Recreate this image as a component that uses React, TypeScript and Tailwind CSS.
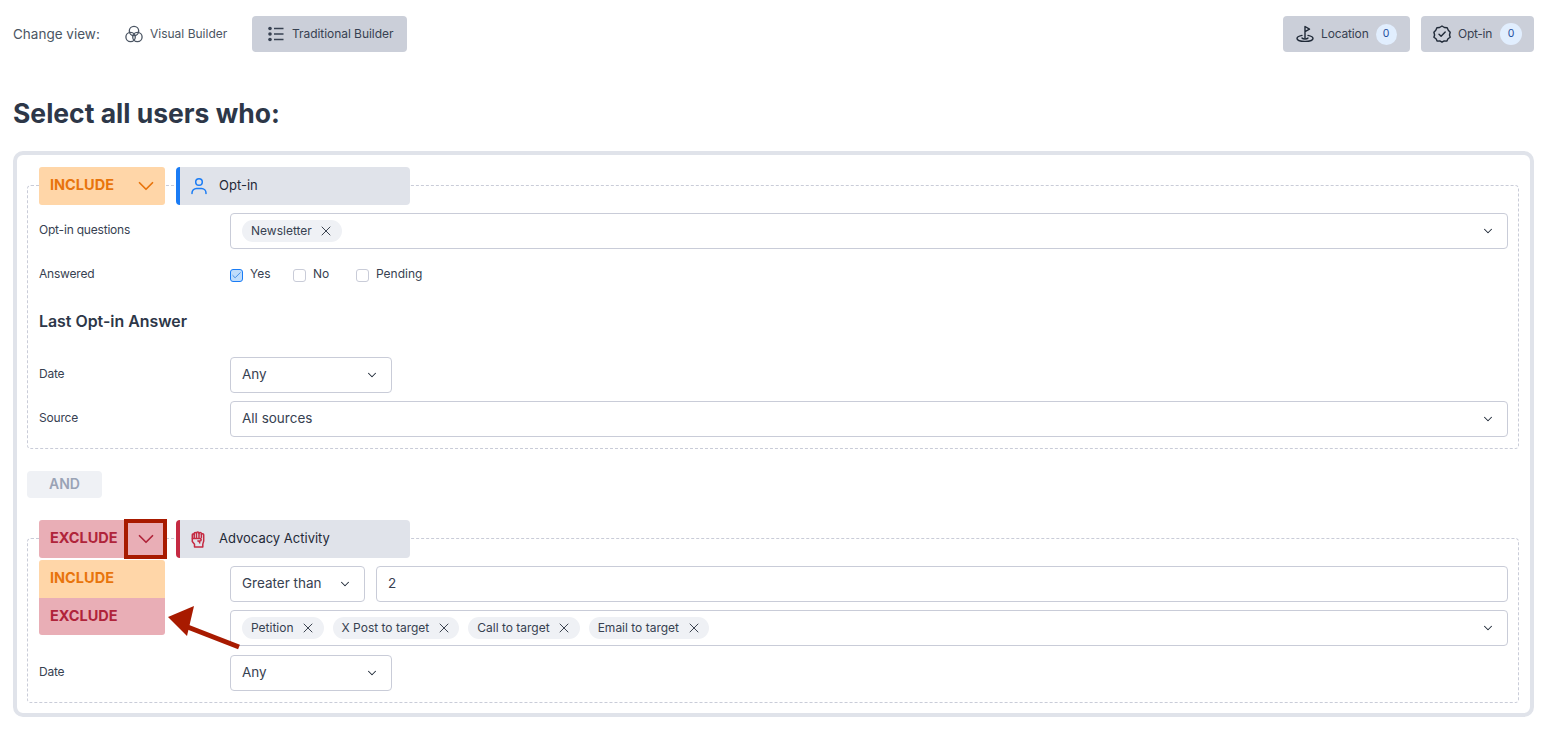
import { ChevronDown, X, Check } from 'lucide-react';

function ThreeCircles() {
  return (
    <svg width="18" height="18" viewBox="0 0 18 18" fill="none" stroke="currentColor" strokeWidth="1.3">
      <circle cx="9" cy="6" r="4.7" />
      <circle cx="5.6" cy="12" r="4.7" />
      <circle cx="12.4" cy="12" r="4.7" />
    </svg>
  );
}

function ListIcon() {
  return (
    <svg width="16" height="16" viewBox="0 0 16 16" fill="none" stroke="currentColor" strokeWidth="1.3">
      <circle cx="2" cy="2.5" r="1.8" fill="currentColor" stroke="none" />
      <circle cx="2" cy="8" r="1.8" fill="currentColor" stroke="none" />
      <circle cx="2" cy="13.5" r="1.8" fill="currentColor" stroke="none" />
      <path d="M6 2.5h9.5M6 8h9.5M6 13.5h9.5" />
    </svg>
  );
}

function FlagIcon() {
  return (
    <svg width="18" height="18" viewBox="0 0 18 18" fill="none" stroke="#1f2937" strokeWidth="1.4" strokeLinejoin="round" strokeLinecap="round">
      <path d="M9 13V1.5l4.5 2.6L9 6.7" />
      <path d="M6 10.4C3 11 1 12 1 13.4c0 1.7 3.6 3 8 3s8-1.3 8-3c0-1.4-2-2.4-5-3" />
      <path d="M6 13c.6.7 1.7 1 3 1s2.4-.3 3-1" />
    </svg>
  );
}

function BadgeCheck() {
  return (
    <svg width="18" height="18" viewBox="0 0 18 18" fill="none" stroke="#1f2937" strokeWidth="1.4" strokeLinejoin="round" strokeLinecap="round">
      <path d="M9 1l2.4 1.5 2.8.2 1.1 2.6 1.9 2-.7 2.7.7 2.2-2.2 1.6-1.2 2.3-2.6-.2L9 17.2l-2.2-1.3-2.6.2L3 13.8.9 12.2l.7-2.2-.7-2.7 1.9-2 1.1-2.6 2.7-.2z" />
      <path d="M6 9.2l2.1 2.1L12.2 7" />
    </svg>
  );
}

function UserIcon() {
  return (
    <svg width="16" height="18" viewBox="0 0 16 18" fill="none" stroke="#1a7cf5" strokeWidth="1.5" strokeLinecap="round">
      <circle cx="8" cy="5" r="3.3" />
      <path d="M1 16.5v-.5a4.5 4.5 0 0 1 4.5-4.5h5a4.5 4.5 0 0 1 4.5 4.5v.5" />
    </svg>
  );
}

function FistIcon() {
  return (
    <svg width="16" height="19" viewBox="0 0 16 18" fill="none" stroke="#c52a42" strokeWidth="1.5" strokeLinejoin="round" strokeLinecap="round">
      <path d="M3.5 16.5v-2.7L1.3 11V4.2c0-.9 1.7-.9 1.9 0V3c0-1.2 2.2-1.2 2.3 0v-.6c0-1.2 2.4-1.2 2.5 0V3c.1-1.2 2.3-1.2 2.4 0v1c.2-1 2.3-1 2.3.2v6.3L11.8 13.6v2.9z" />
      <path d="M3.2 4.2V7.5M5.5 3v4M8 3v4M10.4 4v3" />
      <path d="M1.5 8h7.700c1.300 0 1.300 2.400 0 2.400H6.800c1 .3 1.800 1 2 2" />
    </svg>
  );
}

function Chip({ label }: { label: string }) {
  return (
    <span className="flex h-[22px] items-center gap-[6.5px] rounded-full bg-[#eff1f5] pl-[9px] pr-[7.5px] text-[12px] text-[#374151]">
      <span className="pb-[1px]">{label}</span>
      <X size={16} strokeWidth={1.3} className="text-[#1f2937]" />
    </span>
  );
}

function FieldRow({
  label,
  children,
  className = '',
  labelClass = 'pb-[2px]',
}: {
  label: string;
  children: React.ReactNode;
  className?: string;
  labelClass?: string;
}) {
  return (
    <div className={`flex items-center ${className}`}>
      <span className={`w-[202px] shrink-0 pl-[11px] text-[12px] tracking-[-0.2px] text-[#374151] ${labelClass}`}>{label}</span>
      <div className="min-w-0 flex-1">{children}</div>
    </div>
  );
}

function SelectBox({ children, width }: { children: React.ReactNode; width?: string }) {
  return (
    <div className={`flex h-[36px] items-center justify-between rounded border border-[#c9ccd8] bg-white pl-[11px] pr-[12px] text-[#374151] ${width ?? 'w-full'}`}>
      <div className="flex items-center gap-[9px]">{children}</div>
      <ChevronDown size={14} strokeWidth={1.8} className="text-[#1f2937]" />
    </div>
  );
}

function SelectText({ children }: { children: React.ReactNode }) {
  return <span className="pb-[1px] text-[13.5px]">{children}</span>;
}

function Option({ label, checked }: { label: string; checked?: boolean }) {
  return (
    <span className="flex w-[63px] items-center gap-[7px] text-[12px] text-[#374151]">
      <span
        className={`mt-[3px] flex h-[13px] w-[13px] shrink-0 items-center justify-center rounded-[3px] border ${
          checked ? 'border-[#1a7cf5] bg-[#bfdcfb]' : 'border-[#c9ccd8] bg-white'
        }`}
      >
        {checked && <Check size={11} strokeWidth={1.8} className="text-[#2f7fe0]" />}
      </span>
      {label}
    </span>
  );
}

function RuleHead({
  mode,
  title,
  accent,
  icon,
}: {
  mode: 'include' | 'exclude';
  title: string;
  accent: string;
  icon: React.ReactNode;
}) {
  const isInclude = mode === 'include';
  return (
    <div className="relative z-10 ml-[12px] flex h-[38px] gap-[11px]">
      <div
        className={`flex w-[126px] items-center justify-between rounded-[3px] pl-[11px] pr-[6px] text-[14.5px] font-bold ${
          isInclude ? 'bg-[#ffd6a8] text-[#e8740c]' : 'bg-[#e9aeb6] text-[#b0243a]'
        }`}
      >
        <span className="pb-[3px]">{isInclude ? 'INCLUDE' : 'EXCLUDE'}</span>
        <ChevronDown size={26} strokeWidth={1.6} />
      </div>
      <div className={`flex w-[234px] items-center gap-[12px] rounded-[4px] border-l-[4px] bg-[#e0e3ea] pl-[11px] text-[13px] text-[#1f2937] ${accent}`}>
        {icon}
        <span className="pb-[1px]">{title}</span>
      </div>
    </div>
  );
}

export default function App() {
  return (
    <div className="relative h-[754px] overflow-hidden bg-white font-['Inter',sans-serif]">
      <div className="flex items-start justify-between pl-[13px] pr-[16px] pt-[16px]">
        <div className="flex h-[36px] items-center">
          <span className="w-[112px] text-[13.5px] text-[#4b5563]">Change view:</span>
          <span className="flex w-[127px] items-center gap-[7px] text-[12px] text-[#4b5563]">
            <ThreeCircles />
            Visual Builder
          </span>
          <span className="flex h-[36px] w-[155px] items-center gap-[8px] rounded bg-[#cbcfd9] pl-[16px] text-[12px] tracking-[-0.05px] text-[#374151]">
            <ListIcon />
            Traditional Builder
          </span>
        </div>
        <div className="flex gap-[11px]">
          <span className="flex h-[36px] w-[127px] items-center gap-[7px] rounded bg-[#cbcfd9] pl-[13px] text-[12px] tracking-[-0.15px] text-[#374151]">
            <FlagIcon />
            Location
            <span className="flex h-[21px] w-[21px] items-center justify-center rounded-full bg-[#e1eefe] text-[10.5px] text-[#1d4e9e]">0</span>
          </span>
          <span className="flex h-[36px] w-[113px] items-center gap-[7px] rounded bg-[#cbcfd9] pl-[12px] text-[12px] tracking-[-0.3px] text-[#374151]">
            <BadgeCheck />
            Opt-in
            <span className="ml-[1px] flex h-[22px] w-[22px] items-center justify-center rounded-full bg-[#e1eefe] text-[10.5px] text-[#1d4e9e]">0</span>
          </span>
        </div>
      </div>

      <h1 className="ml-[13px] mt-[45px] text-[26.5px] font-bold leading-[32px] text-[#2d3748]">Select all users who:</h1>

      <div className="mx-[13px] mt-[22px] h-[566px] w-[1521px] rounded-[10px] border-[4px] border-[#e0e3ea] px-[10px] pt-[12px]">
        <RuleHead mode="include" title="Opt-in" accent="border-[#1a7cf5]" icon={<UserIcon />} />
        <div className="-mt-[20px] flex h-[264px] w-[1492px] flex-col rounded border border-dashed border-[#c9ccd8] pr-[10px] pt-[27px]">
          <FieldRow label="Opt-in questions">
            <SelectBox><Chip label="Newsletter" /></SelectBox>
          </FieldRow>
          <FieldRow label="Answered" labelClass="pb-0" className="mt-[14px] h-[22px]">
            <div className="flex items-center">
              <Option label="Yes" checked />
              <Option label="No" />
              <Option label="Pending" />
            </div>
          </FieldRow>
          <h2 className="ml-[11px] mt-[26px] text-[15.9px] font-semibold leading-[21px] text-[#2d3748]">Last Opt-in Answer</h2>
          <FieldRow label="Date" className="mt-[25px]">
            <SelectBox width="w-[162px]"><SelectText>Any</SelectText></SelectBox>
          </FieldRow>
          <FieldRow label="Source" className="mt-[8px]">
            <SelectBox><SelectText>All sources</SelectText></SelectBox>
          </FieldRow>
        </div>

        <div className="mt-[22px] flex h-[27px] w-[75px] items-center justify-center rounded bg-[#eff1f5] pb-[2px] text-[14px] font-semibold text-[#9aa3b5]">AND</div>

        <div className="mt-[22px]">
          <RuleHead mode="exclude" title="Advocacy Activity" accent="border-[#c52a42]" icon={<FistIcon />} />
          <div className="-mt-[20px] flex h-[165px] w-[1492px] flex-col rounded border border-dashed border-[#c9ccd8] pr-[10px] pt-[27px]">
            <FieldRow label="">
              <div className="flex gap-[11px]">
                <SelectBox width="w-[135px] shrink-0"><SelectText>Greater than</SelectText></SelectBox>
                <div className="flex h-[36px] flex-1 items-center rounded border border-[#c9ccd8] pb-[1px] pl-[11px] text-[13.5px] text-[#374151]">2</div>
              </div>
            </FieldRow>
            <FieldRow label="" className="mt-[8px]">
              <SelectBox>
                <Chip label="Petition" />
                <Chip label="X Post to target" />
                <Chip label="Call to target" />
                <Chip label="Email to target" />
              </SelectBox>
            </FieldRow>
            <FieldRow label="Date" className="mt-[9px]">
              <SelectBox width="w-[162px]"><SelectText>Any</SelectText></SelectBox>
            </FieldRow>
          </div>
        </div>
      </div>

      {/* dropdown opened from the exclude button */}
      <div className="absolute left-[39px] top-[560px] z-20 w-[126px] text-[14.5px] font-bold">
        <div className="flex h-[38px] items-center rounded-t-[3px] bg-[#ffd6a8] pb-[3px] pl-[11px] text-[#e8740c]">INCLUDE</div>
        <div className="flex h-[37px] items-center rounded-b-[3px] bg-[#e9aeb6] pb-[2px] pl-[11px] text-[#b0243a]">EXCLUDE</div>
      </div>

      {/* annotation over the screenshot */}
      <div className="absolute left-[124px] top-[519px] z-20 h-[40px] w-[43px] border-[4px] border-[#a81a00]" />
      <svg className="absolute left-[160px] top-[605px] z-20" width="90" height="50" viewBox="0 0 90 50">
        <path d="M79 42L25 21" stroke="#a81a00" strokeWidth="5" fill="none" />
        <path d="M8 12L34 1L27 31z" fill="#a81a00" />
      </svg>
    </div>
  );
}
